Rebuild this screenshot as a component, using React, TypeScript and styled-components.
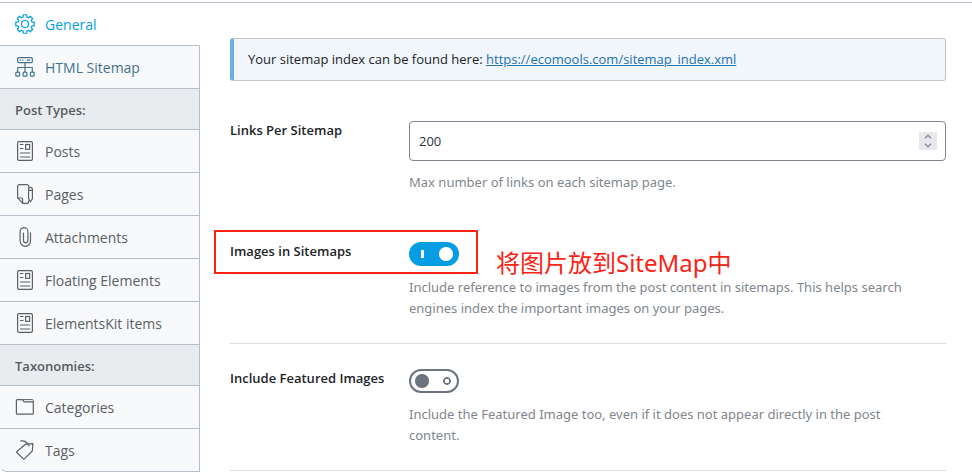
import React, { useState } from "react";
import styled, { createGlobalStyle } from "styled-components";

const GlobalStyle = createGlobalStyle`
  *, *::before, *::after { box-sizing: border-box; }
  body {
    margin: 0;
    background: #fff;
    color: #1d2327;
    font-family: "Open Sans", "Noto Sans CJK SC", sans-serif;
    font-size: 13px;
    line-height: 21px;
  }
`;

const Page = styled.div`
  display: grid;
  grid-template-columns: 200px 1fr;
  align-items: start;
  border-top: 1px solid #b5bfc9;
  margin-top: 2px;
`;

const Sidebar = styled.nav`
  display: flex;
  flex-direction: column;
  border-bottom-left-radius: 6px;
  overflow: hidden;
`;

const NavLink = styled.a<{ $tone?: "active" | "hover" }>`
  display: flex;
  align-items: center;
  gap: 10px;
  height: 43px;
  padding: 0 15px;
  border-bottom: 1px solid #b5bfc9;
  border-right: 1px solid ${(p) => (p.$tone === "active" ? "transparent" : "#b5bfc9")};
  background: ${(p) => (p.$tone === "active" ? "#fff" : "#f8f9fb")};
  color: ${(p) => (p.$tone === "active" ? "#069de3" : p.$tone === "hover" ? "#42738c" : "#5b6064")};
  font-size: 14px;
  text-decoration: none;

  &:last-child { border-bottom-left-radius: 6px; }
`;

const NavHeading = styled.h2`
  display: flex;
  align-items: center;
  height: 41px;
  margin: 0;
  padding: 2px 15px 0;
  border-bottom: 1px solid #b5bfc9;
  border-right: 1px solid #b5bfc9;
  background: #e9ecee;
  color: #565b60;
  font-size: 13px;
  font-weight: 600;
`;

const Icon = styled.svg`
  flex: none;
  width: 20px;
  height: 20px;
  fill: none;
  stroke: currentColor;
  stroke-width: 1.2;
  stroke-linecap: round;
  stroke-linejoin: round;
`;

const Main = styled.main`
  padding: 35px 26px 0 30px;
`;

const Notice = styled.div`
  margin-bottom: 15px;
  padding: 10px 14px;
  border: 1px solid #c3c4c7;
  border-left: 4px solid #72aee6;
  border-radius: 3px;
  background: #f0f6fc;
`;

const TextLink = styled.a`
  color: #2271b1;
`;

const Row = styled.div<{ $divided?: boolean }>`
  position: relative;
  display: grid;
  grid-template-columns: 179px 1fr;
  padding: 25px 0 24px;
  border-bottom: ${(p) => (p.$divided ? "1px solid #dcdddf" : "none")};
`;

const Label = styled.label`
  line-height: 19px;
  font-weight: 600;
`;

const Hint = styled.p`
  max-width: 520px;
  margin: 11px 0 0;
  color: #7f868d;
  font-family: "Noto Sans", sans-serif;
`;

const NumberField = styled.div`
  display: flex;
  align-items: center;
  height: 40px;
  padding: 0 8px 0 9px;
  border: 1px solid #7e8690;
  border-radius: 4px;
  background: #fff;
`;

const NumberInput = styled.input`
  flex: 1;
  min-width: 0;
  padding: 0;
  border: 0;
  outline: 0;
  background: transparent;
  color: #2c3338;
  font: inherit;
  appearance: textfield;

  &::-webkit-inner-spin-button,
  &::-webkit-outer-spin-button { appearance: none; margin: 0; }
`;

const Stepper = styled.div`
  display: grid;
  grid-template-rows: 9px 9px;
  width: 18px;
  background: #e9e9ed;
`;

const StepButton = styled.button`
  display: grid;
  place-items: center;
  padding: 0;
  border: 0;
  background: transparent;
  color: #8f8f9d;

  svg { display: block; width: 8px; height: 5px; fill: none; stroke: currentColor; stroke-width: 1.5; }
`;

const Toggle = styled.input`
  appearance: none;
  display: block;
  width: 50px;
  height: 24px;
  margin: 0;
  border: 2px solid #6c757f;
  border-radius: 12px;
  background:
    radial-gradient(circle at 11px 10px, #6c757f 6.5px, transparent 7.5px),
    radial-gradient(circle at 36px 10px, transparent 2px, #6c757f 2.5px, #6c757f 3.5px, transparent 4.2px),
    #fff;
  background-origin: padding-box;

  &:checked {
    border-color: #069de3;
    background:
      radial-gradient(circle at 35px 10px, #fff 6.5px, transparent 7.5px),
      linear-gradient(#fff, #fff) 10px 6px / 3px 8px no-repeat,
      #069de3;
  }
`;

const Highlight = styled.div`
  position: absolute;
  top: 13px;
  left: -16px;
  width: 264px;
  height: 44px;
  border: 2px solid #fb2314;
  pointer-events: none;
`;

const Annotation = styled.span`
  position: absolute;
  top: 30px;
  left: 266px;
  color: #fb2314;
  font-family: "Noto Sans", "Noto Sans CJK SC", sans-serif;
  font-size: 24px;
  line-height: 32px;
  white-space: nowrap;
`;

const polar = (r: number, deg: number) => {
  const a = (deg * Math.PI) / 180;
  return `${(10 + r * Math.sin(a)).toFixed(2)} ${(10 - r * Math.cos(a)).toFixed(2)}`;
};

const gearPath =
  "M" +
  Array.from({ length: 8 }, (_, i) => i * 45)
    .map((a) => `${polar(7.4, a - 14)}L${polar(9.4, a - 11)}L${polar(9.4, a + 11)}L${polar(7.4, a + 14)}Q${polar(6.6, a + 22.5)} ${polar(7.4, a + 31)}`)
    .join("L") +
  "Z";

const GearIcon = () => (
  <Icon viewBox="0 0 20 20" aria-hidden="true">
    <path d={gearPath} />
    <circle cx="10" cy="10" r="3.5" />
  </Icon>
);

const SitemapIcon = () => (
  <Icon viewBox="0 0 20 20" aria-hidden="true">
    <rect x="2.7" y="0.7" width="14.6" height="5" rx="1" />
    <path d="M5.2 3.2h.3M7.6 3.2h.3M12.3 3.2h2.4M10 5.7v9.2M2.7 14.9v-4.4h14.6v4.4" />
    <rect x="0.8" y="15.2" width="3.8" height="4" rx="1" />
    <rect x="8.1" y="15.2" width="3.8" height="4" rx="1" />
    <rect x="15.4" y="15.2" width="3.8" height="4" rx="1" />
  </Icon>
);

const PostIcon = () => (
  <Icon viewBox="0 0 20 20" aria-hidden="true">
    <rect x="2.6" y="0.7" width="14.8" height="18.6" rx="1.4" />
    <rect x="10.6" y="3.5" width="4" height="4.8" strokeLinejoin="miter" />
    <path d="M5.4 3.5h2.6M5.4 7.5h2.6M5.4 12h9.4M5.4 16h9.4" />
  </Icon>
);

const PageIcon = () => (
  <Icon viewBox="0 0 20 20" aria-hidden="true">
    <path d="M13.6 3V2.2A1.5 1.5 0 0 0 12.1.7H4.2a1.6 1.6 0 0 0-1.6 1.6v11.6l5.2 5.4h4.3a1.5 1.5 0 0 0 1.5-1.5v-1" />
    <path d="M2.8 14h3.6a1.2 1.2 0 0 1 1.2 1.2V19" />
    <path d="M13.6 5.3a1.9 1.9 0 0 1 3.8 0v9.5l-1.9 3-1.9-3ZM13.6 6.4h3.8" />
  </Icon>
);

const ClipIcon = () => (
  <Icon viewBox="0 0 20 20" aria-hidden="true">
    <path d="M15.5 5.8v8.3a5.2 5.2 0 0 1-10.4 0V4.6a3.9 3.9 0 0 1 7.8 0v9a2.2 2.2 0 0 1-4.4 0V6" />
  </Icon>
);

const FolderIcon = () => (
  <Icon viewBox="0 0 20 20" aria-hidden="true">
    <path d="M2.4 2.6h5.2l1.5 2.2h8.2a1 1 0 0 1 1 1v10.4a1 1 0 0 1-1 1H2.4a1 1 0 0 1-1-1V3.6a1 1 0 0 1 1-1Z" />
    <path d="M8.4 2.6h9a.9.9 0 0 1 .9.9v2" strokeWidth="1" />
  </Icon>
);

const TagIcon = () => (
  <Icon viewBox="0 0 20 20" aria-hidden="true">
    <path d="M10.4 4.2 17.9 3.600 17.300 11 9.600 18.600a1 1 0 0 1-1.400 0L2 12.800a.9.9 0 0 1 0-1.300Z" />
    <path d="M5.8.9c3.600-.4 6.600 1.300 8.400 5" />
  </Icon>
);

type NavEntry =
  | { kind: "heading"; text: string }
  | { kind: "link"; text: string; icon: () => React.ReactElement; tone?: "active" | "hover" };

const entries: NavEntry[] = [
  { kind: "link", text: "General", icon: GearIcon, tone: "active" },
  { kind: "link", text: "HTML Sitemap", icon: SitemapIcon, tone: "hover" },
  { kind: "heading", text: "Post Types:" },
  { kind: "link", text: "Posts", icon: PostIcon },
  { kind: "link", text: "Pages", icon: PageIcon },
  { kind: "link", text: "Attachments", icon: ClipIcon },
  { kind: "link", text: "Floating Elements", icon: PostIcon },
  { kind: "link", text: "ElementsKit items", icon: PostIcon },
  { kind: "heading", text: "Taxonomies:" },
  { kind: "link", text: "Categories", icon: FolderIcon },
  { kind: "link", text: "Tags", icon: TagIcon },
];

export default function App() {
  const [links, setLinks] = useState(200);
  const [images, setImages] = useState(true);
  const [featured, setFeatured] = useState(false);

  return (
    <>
      <GlobalStyle />
      <Page>
        <Sidebar aria-label="Sitemap settings">
          {entries.map((entry) =>
            entry.kind === "heading" ? (
              <NavHeading key={entry.text}>{entry.text}</NavHeading>
            ) : (
              <NavLink key={entry.text} href="#" $tone={entry.tone}>
                <entry.icon />
                {entry.text}
              </NavLink>
            )
          )}
        </Sidebar>
        <Main>
          <Notice>
            Your sitemap index can be found here:{" "}
            <TextLink href="https://ecomools.com/sitemap_index.xml">https://ecomools.com/sitemap_index.xml</TextLink>
          </Notice>
          <Row>
            <Label htmlFor="links">Links Per Sitemap</Label>
            <div>
              <NumberField>
                <NumberInput
                  id="links"
                  type="number"
                  value={links}
                  onChange={(e) => setLinks(Number(e.target.value))}
                />
                <Stepper>
                  <StepButton type="button" aria-label="Increase" onClick={() => setLinks(links + 1)}>
                    <svg viewBox="0 0 8 5"><path d="M1 4.200 4 1.200 7 4.200" /></svg>
                  </StepButton>
                  <StepButton type="button" aria-label="Decrease" onClick={() => setLinks(links - 1)}>
                    <svg viewBox="0 0 8 5"><path d="M1 .8 4 3.800 7 .8" /></svg>
                  </StepButton>
                </Stepper>
              </NumberField>
              <Hint>Max number of links on each sitemap page.</Hint>
            </div>
          </Row>
          <Row $divided>
            <Label htmlFor="images">Images in Sitemaps</Label>
            <div>
              <Toggle id="images" type="checkbox" checked={images} onChange={() => setImages(!images)} />
              <Hint>
                Include reference to images from the post content in sitemaps. This helps search engines index the
                important images on your pages.
              </Hint>
            </div>
            <Highlight />
            <Annotation>将图片放到SiteMap中</Annotation>
          </Row>
          <Row $divided>
            <Label htmlFor="featured">Include Featured Images</Label>
            <div>
              <Toggle id="featured" type="checkbox" checked={featured} onChange={() => setFeatured(!featured)} />
              <Hint>
                Include the Featured Image too, even if it does not appear directly in the post content.
              </Hint>
            </div>
          </Row>
        </Main>
      </Page>
    </>
  );
}
